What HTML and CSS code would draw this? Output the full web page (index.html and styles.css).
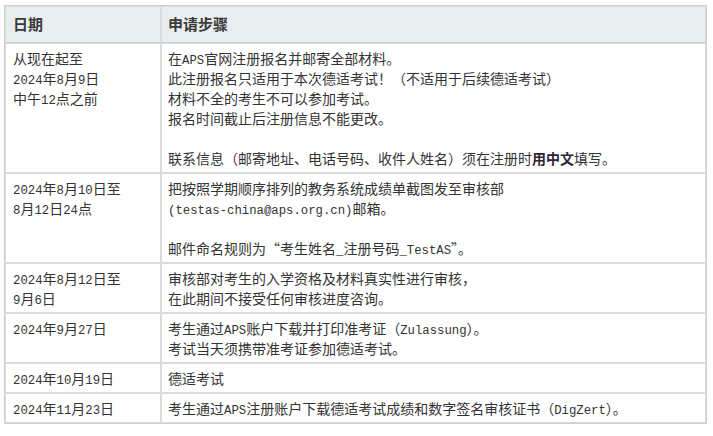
FILE: index.html
```html
<!DOCTYPE html>
<html lang="zh-CN">
<head>
<meta charset="utf-8">
<title>申请步骤</title>
<link rel="stylesheet" href="styles.css">
</head>
<body>
<table class="steps">
  <colgroup><col class="c-date"><col class="c-step"></colgroup>
  <thead>
    <tr><th>日期</th><th>申请步骤</th></tr>
  </thead>
  <tbody>
    <tr>
      <td>从现在起至<br><span class="lt">2024</span>年<span class="lt">8</span>月<span class="lt">9</span>日<br>中午<span class="lt">12</span>点之前</td>
      <td>在<span class="lt">APS</span>官网注册报名并邮寄全部材料。<br>此注册报名只适用于本次德适考试！（不适用于后续德适考试）<br>材料不全的考生不可以参加考试。<br>报名时间截止后注册信息不能更改。<br><br>联系信息（邮寄地址、电话号码、收件人姓名）须在注册时<b>用中文</b>填写。</td>
    </tr>
    <tr>
      <td><span class="lt">2024</span>年<span class="lt">8</span>月<span class="lt">10</span>日至<br><span class="lt">8</span>月<span class="lt">12</span>日<span class="lt">24</span>点</td>
      <td>把按照学期顺序排列的教务系统成绩单截图发至审核部<br><span class="lt">(testas-china@aps.org.cn)</span>邮箱。<br><br>邮件命名规则为“考生姓名<span class="lt">_</span>注册号码<span class="lt">_TestAS</span>”。</td>
    </tr>
    <tr>
      <td><span class="lt">2024</span>年<span class="lt">8</span>月<span class="lt">12</span>日至<br><span class="lt">9</span>月<span class="lt">6</span>日</td>
      <td>审核部对考生的入学资格及材料真实性进行审核，<br>在此期间不接受任何审核进度咨询。</td>
    </tr>
    <tr>
      <td><span class="lt">2024</span>年<span class="lt">9</span>月<span class="lt">27</span>日</td>
      <td>考生通过<span class="lt">APS</span>账户下载并打印准考证（<span class="lt">Zulassung</span>）。<br>考试当天须携带准考证参加德适考试。</td>
    </tr>
    <tr>
      <td><span class="lt">2024</span>年<span class="lt">10</span>月<span class="lt">19</span>日</td>
      <td>德适考试</td>
    </tr>
    <tr>
      <td><span class="lt">2024</span>年<span class="lt">11</span>月<span class="lt">23</span>日</td>
      <td>考生通过<span class="lt">APS</span>注册账户下载德适考试成绩和数字签名审核证书（<span class="lt">DigZert</span>）。</td>
    </tr>
  </tbody>
</table>
</body>
</html>
```

FILE: styles.css
```css
html, body {
  margin: 0;
  padding: 0;
  background: #ffffff;
}

body {
  padding: 5px 0 0 4px;
  font-family: "Noto Sans CJK SC", "Noto Sans", sans-serif;
  font-size: 14px;
  color: #333333;
}

.steps {
  width: 703px;
  border-collapse: separate;
  border-spacing: 0;
  border: 1px solid #cdd1d3;
}

.c-date { width: 156px; }

.steps th,
.steps td {
  border: 1px solid #d8dcde;
  text-align: left;
  vertical-align: top;
  line-height: 20px;
}

.steps th {
  background: #e8eeed;
  font-size: 15px;
  font-weight: bold;
  color: #3a3a3a;
  padding: 7px 6px 8px 7px;
  border-bottom-color: #cdd1d3;
}

.steps td {
  padding: 4px 6px 4px 7px;
}

.steps td + td,
.steps th + th {
  padding-left: 6px;
}

.lt {
  font-family: "Liberation Mono", monospace;
  font-size: 12.3px;
  line-height: 1;
}

.steps b {
  font-weight: bold;
  color: #2e2433;
}
```
